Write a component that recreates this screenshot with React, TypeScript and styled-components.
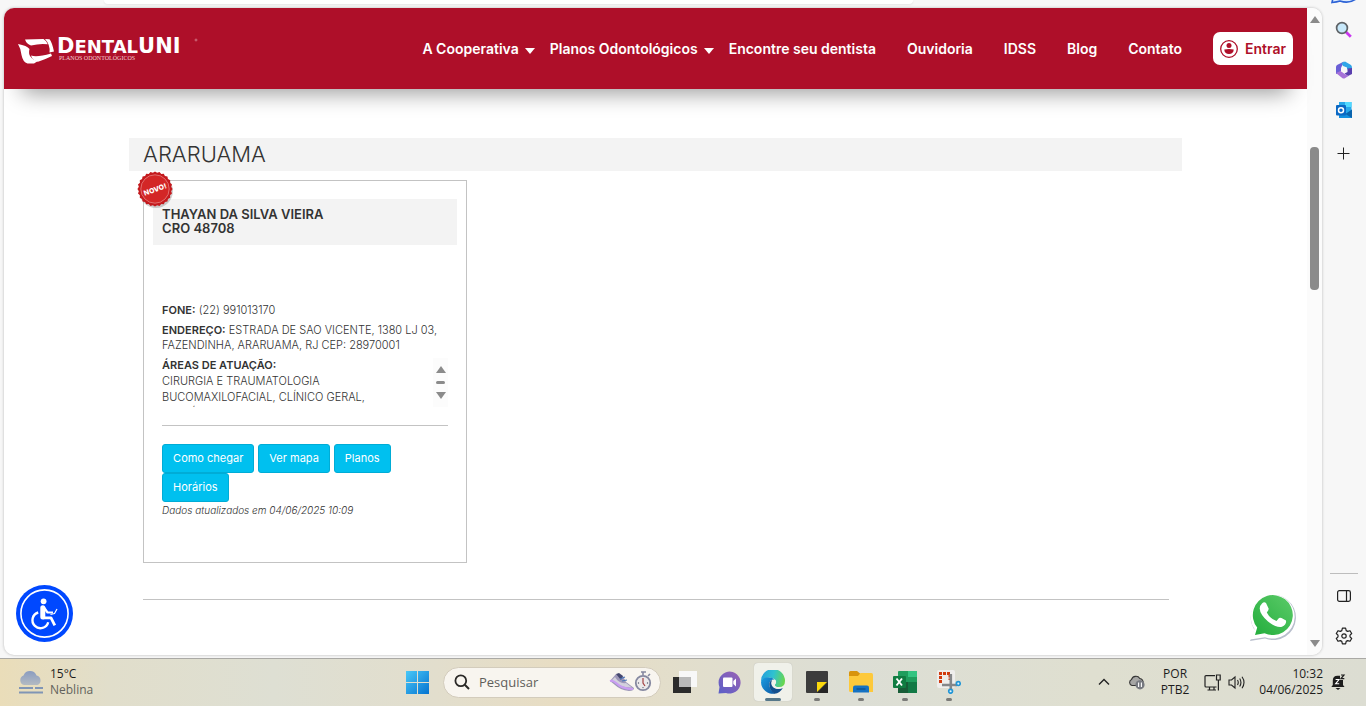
import React from "react";
import styled, { createGlobalStyle } from "styled-components";

const GlobalStyle = createGlobalStyle`
  * { box-sizing: border-box; }
  body {
    margin: 0;
    background: #f7f7f7;
    font-family: Inter, "Liberation Sans", sans-serif;
    color: #333;
  }
  button, input { font-family: inherit; }
  button { cursor: pointer; }
  svg { display: block; flex: none; }
`;

const Desktop = styled.div`
  display: flex;
  flex-direction: column;
  min-height: 100vh;
`;

const Browser = styled.div`
  flex: 1;
  display: flex;
`;

const BrowserMain = styled.div`
  flex: 1;
  min-width: 0;
  display: flex;
  flex-direction: column;
  padding: 0 0 3px 4px;
`;

const TabStrip = styled.div`
  height: 8px;
  padding: 0 31% 0 100px;
`;

const AddressBar = styled.div`
  height: 4px;
  background: #fff;
  border-radius: 0 0 8px 8px;
  box-shadow: 0 1px 2px #e6e6e6;
`;

const Viewport = styled.div`
  flex: 1;
  display: flex;
  background: #fff;
  border-radius: 10px;
  overflow: hidden;
  box-shadow: 0 0 3px #b5b5b5;
`;

const Page = styled.div`
  position: relative;
  flex: 1;
  min-width: 0;
`;

const Header = styled.header`
  display: flex;
  align-items: center;
  justify-content: space-between;
  height: 81px;
  padding: 0 14px;
  background: #ae0f29;
  box-shadow: 0 22px 22px -18px rgba(0, 0, 0, 0.4);
`;

const Nav = styled.nav`
  display: flex;
  align-items: center;
  gap: 31px;
`;

const NavLink = styled.a<{ $menu?: boolean }>`
  display: flex;
  align-items: center;
  gap: 6px;
  margin-right: ${(p) => (p.$menu ? "-16px" : "0")};
  color: #fff;
  font-size: 14px;
  font-weight: 600;
  line-height: 20px;
  white-space: nowrap;
  text-decoration: none;
`;

const Caret = styled.i`
  margin-top: 4px;
  border: 5px solid transparent;
  border-top: 6px solid #fff;
  border-bottom: 0;
`;

const LoginButton = styled.button`
  display: flex;
  align-items: center;
  gap: 7px;
  width: 80px;
  height: 33px;
  padding: 0 7px;
  border: 0;
  border-radius: 7px;
  background: #fff;
  color: #ae0f29;
  font-size: 14px;
  font-weight: 600;
`;

const Content = styled.main`
  width: 80.8%;
  margin: 49px auto 0;
`;

const CityBar = styled.h1`
  margin: 0;
  padding: 0 14px;
  background: #f3f3f3;
  font-size: 22px;
  font-weight: 300;
  line-height: 33px;
`;

const Results = styled.div`
  margin: 9px 13px 0 14px;
  padding-bottom: 36px;
  border-bottom: 1px solid #c3c3c3;
`;

const Card = styled.article`
  position: relative;
  width: 324px;
  min-height: 383px;
  padding: 18px 9px;
  border: 1px solid #c3c3c3;
`;

const NewBadge = styled.div`
  position: absolute;
  left: -9px;
  top: -12px;
`;

const CardTitle = styled.h2`
  margin: 0 0 58px;
  padding: 8px 9px 10px;
  background: #f3f3f3;
  font-size: 13px;
  font-weight: 600;
  line-height: 14px;
`;

const CardBody = styled.div`
  padding: 0 9px;
`;

const Info = styled.p`
  margin: 0 0 5px;
  font-size: 11px;
  font-weight: 300;
  line-height: 15px;
  b { font-weight: 600; }
`;

const AreasBox = styled.div`
  display: flex;
  justify-content: space-between;
  height: 49px;
  margin-bottom: 18px;
  overflow: hidden;
`;

const AreasText = styled(Info)`
  width: 240px;
  span { display: block; line-height: 16px; }
`;

const MiniScroll = styled.div`
  display: flex;
  flex-direction: column;
  align-items: center;
  justify-content: space-between;
  width: 15px;
  padding: 8px 0;
  background: #fcfcfc;
`;

const MiniThumb = styled.span`
  width: 9px;
  height: 3px;
  border-radius: 2px;
  background: #8b8b8b;
`;

const Arrow = styled.i<{ $down?: boolean }>`
  border: 5px solid transparent;
  border-bottom: ${(p) => (p.$down ? "0" : "7px solid #8b8b8b")};
  border-top: ${(p) => (p.$down ? "7px solid #8b8b8b" : "0")};
`;

const Actions = styled.div`
  display: flex;
  flex-wrap: wrap;
  column-gap: 4px;
  padding: 18px 48px 0 0;
  border-top: 1px solid #c3c3c3;
`;

const ActionButton = styled.button`
  height: 29px;
  padding: 0 10px 2px;
  border: 1px solid #00acd6;
  border-radius: 3px;
  background: #00c0ef;
  color: #fff;
  font-size: 11px;
  font-weight: 400;
`;

const Updated = styled.p`
  margin: 1px 0 0;
  font-size: 10px;
  font-style: italic;
  font-weight: 300;
  line-height: 14px;
`;

const FloatButton = styled.button<{ $side: "left" | "right" }>`
  position: absolute;
  bottom: 13px;
  ${(p) => (p.$side === "left" ? "left: 12px;" : "right: 10px;")}
  padding: 0;
  border: 0;
  background: none;
`;

const PageScroll = styled.div`
  display: flex;
  flex-direction: column;
  align-items: center;
  width: 15px;
  padding: 8px 0;
  background: #fbfbfb;
`;

const Track = styled.div`
  flex: 1;
  padding-top: 124px;
`;

const Thumb = styled.div`
  width: 9px;
  height: 143px;
  border-radius: 4px;
  background: #8b8b8b;
`;

const Sidebar = styled.aside`
  display: flex;
  flex-direction: column;
  justify-content: space-between;
  width: 44px;
  padding-bottom: 10px;
`;

const SideGroup = styled.div<{ $ruled?: boolean }>`
  display: flex;
  flex-direction: column;
  align-items: center;
  gap: 16px;
  margin: 0 8px;
  padding-top: ${(p) => (p.$ruled ? "10px" : "0")};
  border-top: ${(p) => (p.$ruled ? "1px solid #bdbdbd" : "0")};
`;

const IconButton = styled.button<{ $h?: number }>`
  display: flex;
  align-items: center;
  justify-content: center;
  width: 24px;
  height: ${(p) => p.$h ?? 24}px;
  padding: 0;
  border: 0;
  background: none;
`;

const Taskbar = styled.footer`
  display: grid;
  grid-template-columns: 1fr auto 1fr;
  align-items: center;
  height: 48px;
  padding-bottom: 1px;
  border-top: 1px solid #aaa9a5;
  background: linear-gradient(90deg, #eaddb9 0%, #e1decb 8%, #dedfd3 20%, #e2decd 32%, #e8ddc3 41%, #e2decc 50%, #dcded5 62%, #dfdfd0 80%, #dcddd2 100%);
  font-family: "Open Sans", "Noto Sans", sans-serif;
  font-size: 12px;
  line-height: 16px;
  color: #1c1c1c;
`;

const Weather = styled.div`
  display: flex;
  align-items: center;
  gap: 7px;
  padding-left: 18px;
  span { display: block; color: #62625c; }
`;

const Dock = styled.div`
  display: flex;
  align-items: center;
`;

const DockButton = styled.button<{ $active?: boolean; $running?: boolean }>`
  position: relative;
  display: flex;
  align-items: center;
  justify-content: center;
  width: 38px;
  height: 38px;
  margin: 0 3px;
  padding: 0;
  border: 0;
  border-radius: 4px;
  background: ${(p) => (p.$active ? "#f0f1ea" : "none")};
  box-shadow: ${(p) => (p.$active ? "0 0 1px #aaa" : "none")};
  &::after {
    content: "";
    position: absolute;
    bottom: 0;
    width: ${(p) => (p.$active ? 16 : p.$running ? 6 : 0)}px;
    height: 3px;
    border-radius: 2px;
    background: ${(p) => (p.$active ? "#557789" : "#7b7b78")};
  }
`;

const SearchBox = styled.label`
  display: flex;
  align-items: center;
  width: 218px;
  height: 31px;
  margin: 0 2px 0 4px;
  padding: 0 8px 0 10px;
  border: 1px solid #d3ccbc;
  border-radius: 16px;
  background: #f8f5ef;
`;

const SearchInput = styled.input`
  flex: 1;
  min-width: 0;
  padding: 0 0 0 9px;
  border: 0;
  outline: 0;
  background: none;
  font-size: 13px;
  line-height: 18px;
  &::placeholder { color: #5f5e5a; opacity: 1; }
`;

const Tray = styled.div`
  display: flex;
  align-items: center;
  justify-content: flex-end;
  padding-right: 20px;
`;

const TrayText = styled.div<{ $align: string; $left: number; $right: number }>`
  margin: 0 ${(p) => p.$right}px 0 ${(p) => p.$left}px;
  text-align: ${(p) => p.$align};
  span { display: block; }
`;

const TrayGap = styled.div<{ $w: number }>`
  width: ${(p) => p.$w}px;
`;

const Logo = () => (
  <svg width="182" height="30" viewBox="0 0 182 30" role="img" aria-label="DentalUNI">
    <g fill="#fff">
      <path d="M7 5.5 L25.5 5 Q29 7 29.8 10.3 Q22 9.2 13 11.6 Q8.5 10 7 5.5Z" />
      <path d="M27 5 L31.5 5.2 Q34 8 36 17.6 L31.5 18.4 Q32.5 11 27 5Z" />
      <path d="M0 10 Q9 11.5 11.5 15 Q9 24 20 27 L16 29.5 H9.5 Q5 28.5 3.5 21 Q2.8 14.5 0 10Z" />
      <path d="M13 21.5 Q19 23.5 33 19.5 L34 22 Q27 25.5 20 27.8 Q14 26 13 21.5Z" />
    </g>
    <text x="39" y="19" fill="#fff" fontFamily="'DejaVu Sans', sans-serif" fontWeight="700" fontSize="21">
      D<tspan fontSize="18">ENTAL</tspan>UNI
    </text>
    <text x="41" y="26" fill="#f3cfd4" fontFamily="'Liberation Serif', serif" fontSize="6">
      PLANOS ODONTOLÓGICOS
    </text>
    <circle cx="178" cy="6" r="1" fill="none" stroke="#e3a0ab" strokeWidth="0.6" />
  </svg>
);

const UserIcon = () => (
  <svg width="18" height="18" viewBox="0 0 18 18">
    <circle cx="9" cy="9" r="8.3" fill="none" stroke="#ae0f29" strokeWidth="1.3" />
    <circle cx="9" cy="5.6" r="2.5" fill="#ae0f29" />
    <path d="M4.3 9.6 Q9 8.6 13.7 9.6 Q13.6 14 9 14 Q4.4 14 4.3 9.6Z" fill="#ae0f29" />
  </svg>
);

const sealPoints = Array.from({ length: 48 }, (_, i) => {
  const r = i % 2 ? 16.3 : 17.6;
  const a = (i * Math.PI) / 24;
  return `${20 + r * Math.cos(a)},${20 + r * Math.sin(a)}`;
}).join(" ");

const Seal = () => (
  <svg width="40" height="40" viewBox="0 0 40 40">
    <circle cx="21" cy="22" r="17" fill="#000" opacity="0.18" />
    <polygon points={sealPoints} fill="#c41a1e" />
    <circle cx="20" cy="20" r="14.2" fill="#d32626" stroke="#eda0a0" strokeWidth="0.6" />
    <text x="20" y="23" transform="rotate(-19 20 20)" textAnchor="middle" fill="#fff" fontFamily="Inter, sans-serif" fontWeight="800" fontSize="7">
      NOVO!
    </text>
  </svg>
);

const AccessIcon = () => (
  <svg width="57" height="57" viewBox="0 0 57 57">
    <circle cx="28.5" cy="28.5" r="28.5" fill="#0048ff" />
    <circle cx="28.5" cy="28.5" r="23.6" fill="none" stroke="#fff" strokeWidth="1.6" />
    <circle cx="27.6" cy="16.3" r="2.9" fill="#fff" />
    <g fill="none" stroke="#fff" strokeLinejoin="round">
      <path d="M26.8 22.8 V32" strokeWidth="5" strokeLinecap="round" />
      <path d="M27 32.8 H35 L38.8 40.4" strokeWidth="2.8" />
      <path d="M28 22.5 L31.5 27.5 H37" strokeWidth="2.2" />
      <path d="M34.5 29.5 L38.5 28.5 L41 24" strokeWidth="1.2" />
      <path d="M22.2 27.5 A8 8 0 1 0 32.2 37.2" strokeWidth="2.4" />
    </g>
  </svg>
);

const WhatsIcon = () => (
  <svg width="48" height="50" viewBox="0 0 48 50">
    <defs>
      <linearGradient id="wa" x1="0" y1="1" x2="1" y2="0">
        <stop offset="0" stopColor="#22ad3c" />
        <stop offset="1" stopColor="#5ccb69" />
      </linearGradient>
    </defs>
    <g transform="translate(0 3)">
      <path d="M1 46 L5.5 35 A22.6 22.6 0 1 1 16 43.5Z" fill="#b9bfcd" />
      <path d="M1 44.5 L5.5 34 A22 22 0 1 1 16 42.2Z" fill="#fff" />
      <path d="M6 40 L8.2 32.6 A20 20 0 1 1 15.5 38.3Z" fill="url(#wa)" />
      <path d="M13 8.5 Q15 6.5 17 8 L19.6 13.5 Q20 15 17.8 17.5 Q21 24 27.5 26 L30 23 Q31 22.3 32.5 23 L37 25.5 Q37.8 29.5 33 31.8 Q27 33 19 26.5 Q11 19.5 10.7 13.5 Q10.8 10.5 13 8.5Z" fill="#fff" />
    </g>
  </svg>
);

const CopilotEdge = () => (
  <svg width="26" height="6" viewBox="0 0 26 6">
    <path d="M2 0 L1 4.5 Q6 4 9 3 Q18 6 25 1" fill="#dcecff" stroke="#2c62d6" strokeWidth="1.6" />
  </svg>
);

const LensIcon = () => (
  <svg width="18" height="18" viewBox="0 0 18 18">
    <path d="M11 11 L15.8 15.8" stroke="#c936f0" strokeWidth="2.8" />
    <circle cx="7" cy="7" r="5.4" fill="#c7e8fa" stroke="#5e6266" strokeWidth="1.7" />
  </svg>
);

const M365Icon = () => (
  <svg width="18" height="18" viewBox="0 0 18 18">
    <path d="M9 0.5 L2 4 Q1 5 1 6 V13 L6 11 V7 Z" fill="#6a5fd6" />
    <path d="M6.5 2 L10 0.5 L16 4 Q17 5 17 7 V11 L12 8 V6.5 L8 5Z" fill="#2fa5e8" />
    <path d="M17 7 V13 L13 15 L9.5 12.5 L12.5 11 V7.5Z" fill="#5a3fae" />
    <path d="M1 12 L6.5 9.5 L9 12.5 L13.5 15 L9.5 17.5 Q8.5 17.8 7.5 17.2Z" fill="#a672d8" />
    <path d="M9 5.7 L12 7.4 V10.6 L9 12.3 L6 10.6 V7.4Z" fill="#f7f7f7" />
  </svg>
);

const OutlookIcon = () => (
  <svg width="18" height="18" viewBox="0 0 18 18">
    <rect x="4" y="1" width="12.5" height="12" fill="#28a8ea" />
    <rect x="10" y="1" width="6.5" height="5" fill="#50d9ff" />
    <path d="M4 9 L10.5 13 L17 8.5 V17 H4Z" fill="#1490df" />
    <path d="M17 8.5 V17 L10.5 13Z" fill="#0a64ad" />
    <rect x="1" y="4" width="10" height="10.5" rx="1" fill="#0b69c4" />
    <circle cx="6" cy="9.2" r="2.5" fill="none" stroke="#fff" strokeWidth="1.5" />
  </svg>
);

const PlusIcon = () => (
  <svg width="14" height="14" viewBox="0 0 14 14">
    <path d="M6.5 0.5 V12.5 M0.5 6.5 H12.5" stroke="#222" strokeWidth="1" />
  </svg>
);

const PanelIcon = () => (
  <svg width="14" height="12" viewBox="0 0 14 12">
    <rect x="0.6" y="0.6" width="12.8" height="10.8" rx="1.8" fill="none" stroke="#222" strokeWidth="1.2" />
    <path d="M9.5 1 V11" stroke="#222" strokeWidth="1.2" />
  </svg>
);

const GearIcon = () => (
  <svg width="18" height="18" viewBox="0 0 18 18" fill="none" stroke="#222" strokeWidth="1.2" strokeLinejoin="round">
    <path d="M7.4 1.2 H10.6 L11.2 3.6 L12.7 4.4 L15 3.7 L16.7 6.5 L15 8.2 V9.8 L16.7 11.5 L15 14.3 L12.7 13.6 L11.2 14.4 L10.6 16.8 H7.4 L6.8 14.4 L5.3 13.6 L3 14.3 L1.3 11.5 L3 9.8 V8.2 L1.3 6.5 L3 3.7 L5.3 4.4 L6.8 3.6Z" />
    <circle cx="9" cy="9" r="2.2" />
  </svg>
);

const FogIcon = () => (
  <svg width="25" height="24" viewBox="0 0 25 24">
    <defs>
      <linearGradient id="fog" x1="0" y1="0" x2="0" y2="1">
        <stop offset="0" stopColor="#8a9cc0" />
        <stop offset="1" stopColor="#b3bac2" />
      </linearGradient>
    </defs>
    <path d="M6 15 A5 5 0 0 1 5.5 5.5 A7 7 0 0 1 18.5 5.5 A5 5 0 0 1 19.5 15Z" fill="url(#fog)" />
    <path d="M1 18 H15 M17 18 H25 M1 22.5 H25" stroke="#8095b5" strokeWidth="2" />
  </svg>
);

const StartIcon = () => (
  <svg width="23" height="23" viewBox="0 0 23 23">
    <defs>
      <linearGradient id="win" x1="0" y1="0" x2="1" y2="1">
        <stop offset="0" stopColor="#48c8f8" />
        <stop offset="1" stopColor="#0573d0" />
      </linearGradient>
    </defs>
    <path d="M0 0 H11 V11 H0Z M12 0 H23 V11 H12Z M0 12 H11 V23 H0Z M12 12 H23 V23 H12Z" fill="url(#win)" />
  </svg>
);

const SearchIcon = () => (
  <svg width="16" height="16" viewBox="0 0 16 16" fill="none" stroke="#2a2927">
    <circle cx="6.8" cy="6.8" r="5.4" strokeWidth="1.8" />
    <path d="M10.8 10.8 L15 15" strokeWidth="2" />
  </svg>
);

const ShoeIcon = () => (
  <svg width="43" height="22" viewBox="0 0 43 22">
    <path d="M1 10 L7 3 Q10 5 14 5 L17 11 L25 17 Q25 20 20 20 Q11 19 6 14Z" fill="#9d97b8" />
    <path d="M2 10 L6 6 Q10 13 17 12 L23 16.5 Q14 17 7 12Z" fill="#d3d0dd" />
    <path d="M7 3 L10 2 L14 5 L12 9Z" fill="#45476f" />
    <path d="M1 10 Q4 9 7 12 Q13 18 24 18" fill="none" stroke="#c99cf2" strokeWidth="2" />
    <path d="M11 8 L16 6 M13 10 L18 9" stroke="#4b76b8" strokeWidth="1.2" />
    <circle cx="34" cy="12" r="7.2" fill="#ece9ea" stroke="#8588a0" strokeWidth="1.8" />
    <path d="M34 4 V1 M32 1 H37 M39 5 L41 3" stroke="#8588a0" strokeWidth="1.6" />
    <path d="M34 7 V12 L36 15" fill="none" stroke="#a34242" strokeWidth="1.2" />
    <g fill="#55586e"><circle cx="29.5" cy="12" r="0.7" /><circle cx="38.5" cy="12" r="0.7" /><circle cx="34" cy="16.6" r="0.7" /></g>
  </svg>
);

const TaskViewIcon = () => (
  <svg width="24" height="22" viewBox="0 0 24 22">
    <rect x="0" y="6" width="18" height="16" fill="#2b2b2b" />
    <rect x="6" y="0" width="18" height="16" fill="#f8f8f8" />
    <rect x="6" y="6" width="12" height="10" fill="#b9b9b9" />
  </svg>
);

const MeetIcon = () => (
  <svg width="23" height="23" viewBox="0 0 23 23">
    <defs>
      <linearGradient id="meet" x1="1" y1="0" x2="0" y2="1">
        <stop offset="0" stopColor="#9a62b4" />
        <stop offset="1" stopColor="#5a5fc8" />
      </linearGradient>
    </defs>
    <path d="M0.5 22.5 L1.5 16 A11 11 0 1 1 8 22Z" fill="url(#meet)" />
    <rect x="5" y="6.5" width="9.5" height="9.5" rx="1" fill="#fff" />
    <path d="M15.3 10 L18 7.5 V15.5 L15.3 13Z" fill="#fff" />
  </svg>
);

const EdgeIcon = () => (
  <svg width="24" height="24" viewBox="0 0 24 24">
    <defs>
      <linearGradient id="edgeTop" x1="0" y1="0.3" x2="1" y2="0.5">
        <stop offset="0" stopColor="#259fdc" />
        <stop offset="0.5" stopColor="#2fc2d0" />
        <stop offset="1" stopColor="#68d64f" />
      </linearGradient>
      <linearGradient id="edgeLow" x1="0" y1="0" x2="1" y2="1">
        <stop offset="0" stopColor="#1b9de2" />
        <stop offset="1" stopColor="#0c59a4" />
      </linearGradient>
    </defs>
    <path d="M0 11 A12 12 0 0 1 24 11 Q24 17 18 17 Q13.5 17 14 14.5 Q16 12.5 14.5 10 Q12 7 7.5 7.5 Q2 8 0 12Z" fill="url(#edgeTop)" />
    <path d="M0 12 Q1 7.5 7 7.3 Q11.5 7.3 13.5 9.5 Q8.5 9.2 8.3 14.5 Q8.5 20 14 23.7 A12 12 0 0 1 0 12Z" fill="url(#edgeLow)" />
    <path d="M8.3 14.5 Q8.3 11 11 10 Q9.5 14.5 12.8 17.2 Q17 20 21.8 18 Q19 23 13.5 23.8 Q8.8 21 8.3 14.5Z" fill="#124f8e" />
    <path d="M10.5 12 Q9.8 15.5 12.8 17.8 Q17 20.3 21.5 18 Q20 18 16.5 17.6 Q13 16.5 14.2 14 Q16 12 14 10 Q11.5 9.5 10.5 12Z" fill="#f0f1ea" />
  </svg>
);

const NotesIcon = () => (
  <svg width="22" height="22" viewBox="0 0 22 22">
    <rect width="22" height="22" rx="1" fill="#3c3c3c" />
    <path d="M11 11 H21 L11 21Z" fill="#fbd90c" />
    <path d="M22 11 V22 H11Z" fill="#262626" />
  </svg>
);

const FolderIcon = () => (
  <svg width="24" height="22" viewBox="0 0 24 22">
    <path d="M0 1.5 Q0 0 1.5 0 H8 L11 2.5 V6 H0Z" fill="#d8940e" />
    <path d="M0 5 H9 L11.5 2 H22.5 Q24 2 24 4 V21 H1.5 Q0 21 0 19.5Z" fill="#fdc93b" />
    <path d="M4 21.5 V16.5 Q4 14.5 6 14.5 H18 Q20 14.5 20 16.5 V21.5Z" fill="#1672c2" />
    <path d="M7.5 18 H16.5" stroke="#0d4f8e" strokeWidth="1.3" />
  </svg>
);

const SheetIcon = () => (
  <svg width="24" height="22" viewBox="0 0 24 22">
    <rect x="5" y="0" width="19" height="22" rx="1" fill="#1f9d5d" />
    <rect x="15" y="0" width="9" height="6" fill="#33c481" />
    <rect x="5" y="11" width="10" height="11" fill="#185c37" />
    <rect x="15" y="11" width="9" height="11" fill="#127945" />
    <rect x="0" y="5" width="13" height="12" rx="1" fill="#107c41" />
    <path d="M3.5 7.5 L9 14.5 M9 7.5 L3.5 14.5" stroke="#fff" strokeWidth="1.9" />
  </svg>
);

const SnipIcon = () => (
  <svg width="24" height="24" viewBox="0 0 24 24">
    <rect x="0" y="0" width="18" height="18" rx="2" fill="#efeeec" />
    <path d="M3.5 13 V3.5 H13 V10" fill="none" stroke="#d23b10" strokeWidth="3" strokeDasharray="3 1" />
    <path d="M13.8 4 V19 M5 15 H20" stroke="#858789" strokeWidth="2.6" />
    <g fill="#dff2fb" stroke="#2296d6" strokeWidth="1.7"><circle cx="21.3" cy="13.6" r="1.9" /><circle cx="13.6" cy="21.3" r="1.9" /></g>
  </svg>
);

const ChevronIcon = () => (
  <svg width="12" height="8" viewBox="0 0 12 8">
    <path d="M1 6.5 L6 1.5 L11 6.5" fill="none" stroke="#222" strokeWidth="1.4" />
  </svg>
);

const CloudIcon = () => (
  <svg width="17" height="16" viewBox="0 0 17 16">
    <path d="M4 11.5 A3.2 3.2 0 0 1 3.5 5.5 A4.6 4.6 0 0 1 11.8 4.5 A3.6 3.6 0 0 1 15 9 V11.5Z" fill="#a6a6a4" stroke="#333" strokeWidth="1.1" />
    <circle cx="12" cy="10.8" r="4.6" fill="#777a80" />
    <path d="M10.6 8.6 V13 M13.4 8.6 V13" stroke="#fff" strokeWidth="1.1" />
  </svg>
);

const MonitorIcon = () => (
  <svg width="17" height="17" viewBox="0 0 17 17" fill="none" stroke="#222" strokeWidth="1.2">
    <path d="M11 1.6 H2 Q1 1.6 1 2.6 V12 Q1 13 2 13 H12.5 M5.5 13 V16 M10 13 V16 M3.5 16 H12" />
    <path d="M12.5 1 H16.2 V6 H12.5Z M14.4 6 V16.5" />
  </svg>
);

const SpeakerIcon = () => (
  <svg width="18" height="15" viewBox="0 0 18 15" fill="none" stroke="#222" strokeWidth="1.1">
    <path d="M1 5 H3.5 L7 2 V13 L3.5 10 H1Z" />
    <path d="M9.5 5 Q11 7.5 9.5 10 M11.7 3.5 Q14.2 7.5 11.7 11.5 M14 1.8 Q18 7.5 14 13.2" />
  </svg>
);

const BellIcon = () => (
  <svg width="16" height="16" viewBox="0 0 16 16">
    <path d="M2.8 11 V6.5 Q2.8 1.8 7.5 1.8 H10 V6 H13 V11 L14.5 13 H1.3Z" fill="#1d1d1d" />
    <path d="M5.5 14 H10.5 L8 16Z" fill="#1d1d1d" />
    <path d="M5.6 5.5 H9 L5.6 9.8 H9.2" fill="none" stroke="#fff" strokeWidth="1.1" />
    <path d="M11 1 H14 L11 4.6 H14.3" fill="none" stroke="#1d1d1d" strokeWidth="1.2" />
  </svg>
);

const links = [
  { label: "A Cooperativa", menu: true },
  { label: "Planos Odontológicos", menu: true },
  { label: "Encontre seu dentista" },
  { label: "Ouvidoria" },
  { label: "IDSS" },
  { label: "Blog" },
  { label: "Contato" },
];

const apps = [
  { name: "Visão de tarefas", Icon: TaskViewIcon },
  { name: "Chat", Icon: MeetIcon },
  { name: "Microsoft Edge", Icon: EdgeIcon, active: true },
  { name: "Notas Autoadesivas", Icon: NotesIcon, running: true },
  { name: "Explorador de Arquivos", Icon: FolderIcon, running: true },
  { name: "Excel", Icon: SheetIcon, running: true },
  { name: "Ferramenta de Captura", Icon: SnipIcon, running: true },
];

export default function App() {
  return (
    <Desktop>
      <GlobalStyle />
      <Browser>
        <BrowserMain>
          <TabStrip><AddressBar /></TabStrip>
          <Viewport>
            <Page>
              <Header>
                <Logo />
                <Nav>
                  {links.map((l) => (
                    <NavLink key={l.label} href="#" $menu={l.menu}>
                      {l.label}
                      {l.menu && <Caret />}
                    </NavLink>
                  ))}
                  <LoginButton><UserIcon />Entrar</LoginButton>
                </Nav>
              </Header>
              <Content>
                <CityBar>ARARUAMA</CityBar>
                <Results>
                  <Card>
                    <NewBadge><Seal /></NewBadge>
                    <CardTitle>THAYAN DA SILVA VIEIRA<br />CRO 48708</CardTitle>
                    <CardBody>
                      <Info><b>FONE:</b> (22) 991013170</Info>
                      <Info>
                        <b>ENDEREÇO:</b> ESTRADA DE SAO VICENTE, 1380 LJ 03, FAZENDINHA, ARARUAMA, RJ CEP: 28970001
                      </Info>
                      <AreasBox>
                        <AreasText>
                          <b>ÁREAS DE ATUAÇÃO:</b>
                          <span>CIRURGIA E TRAUMATOLOGIA BUCOMAXILOFACIAL, CLÍNICO GERAL, DENTÍSTICA</span>
                        </AreasText>
                        <MiniScroll><Arrow /><MiniThumb /><Arrow $down /></MiniScroll>
                      </AreasBox>
                      <Actions>
                        <ActionButton>Como chegar</ActionButton>
                        <ActionButton>Ver mapa</ActionButton>
                        <ActionButton>Planos</ActionButton>
                        <ActionButton>Horários</ActionButton>
                      </Actions>
                      <Updated>Dados atualizados em 04/06/2025 10:09</Updated>
                    </CardBody>
                  </Card>
                </Results>
              </Content>
              <FloatButton $side="left" aria-label="Acessibilidade"><AccessIcon /></FloatButton>
              <FloatButton $side="right" aria-label="WhatsApp"><WhatsIcon /></FloatButton>
            </Page>
            <PageScroll>
              <Arrow />
              <Track><Thumb /></Track>
              <Arrow $down />
            </PageScroll>
          </Viewport>
        </BrowserMain>
        <Sidebar>
          <SideGroup>
            <IconButton $h={2} aria-label="Copilot"><CopilotEdge /></IconButton>
            <IconButton aria-label="Pesquisar"><LensIcon /></IconButton>
            <IconButton aria-label="Microsoft 365"><M365Icon /></IconButton>
            <IconButton aria-label="Outlook"><OutlookIcon /></IconButton>
            <IconButton $h={32} aria-label="Adicionar"><PlusIcon /></IconButton>
          </SideGroup>
          <SideGroup $ruled>
            <IconButton aria-label="Painel"><PanelIcon /></IconButton>
            <IconButton aria-label="Configurações"><GearIcon /></IconButton>
          </SideGroup>
        </Sidebar>
      </Browser>
      <Taskbar>
        <Weather>
          <FogIcon />
          <div>15°C<span>Neblina</span></div>
        </Weather>
        <Dock>
          <DockButton aria-label="Iniciar"><StartIcon /></DockButton>
          <SearchBox>
            <SearchIcon />
            <SearchInput type="text" placeholder="Pesquisar" aria-label="Pesquisar" />
            <ShoeIcon />
          </SearchBox>
          {apps.map(({ name, Icon, active, running }) => (
            <DockButton key={name} aria-label={name} $active={active} $running={running}><Icon /></DockButton>
          ))}
        </Dock>
        <Tray>
          <ChevronIcon />
          <TrayGap $w={18} />
          <CloudIcon />
          <TrayText $align="center" $left={16} $right={15}>POR<span>PTB2</span></TrayText>
          <MonitorIcon />
          <TrayGap $w={7} />
          <SpeakerIcon />
          <TrayText $align="right" $left={13} $right={7}>10:32<span>04/06/2025</span></TrayText>
          <BellIcon />
        </Tray>
      </Taskbar>
    </Desktop>
  );
}
